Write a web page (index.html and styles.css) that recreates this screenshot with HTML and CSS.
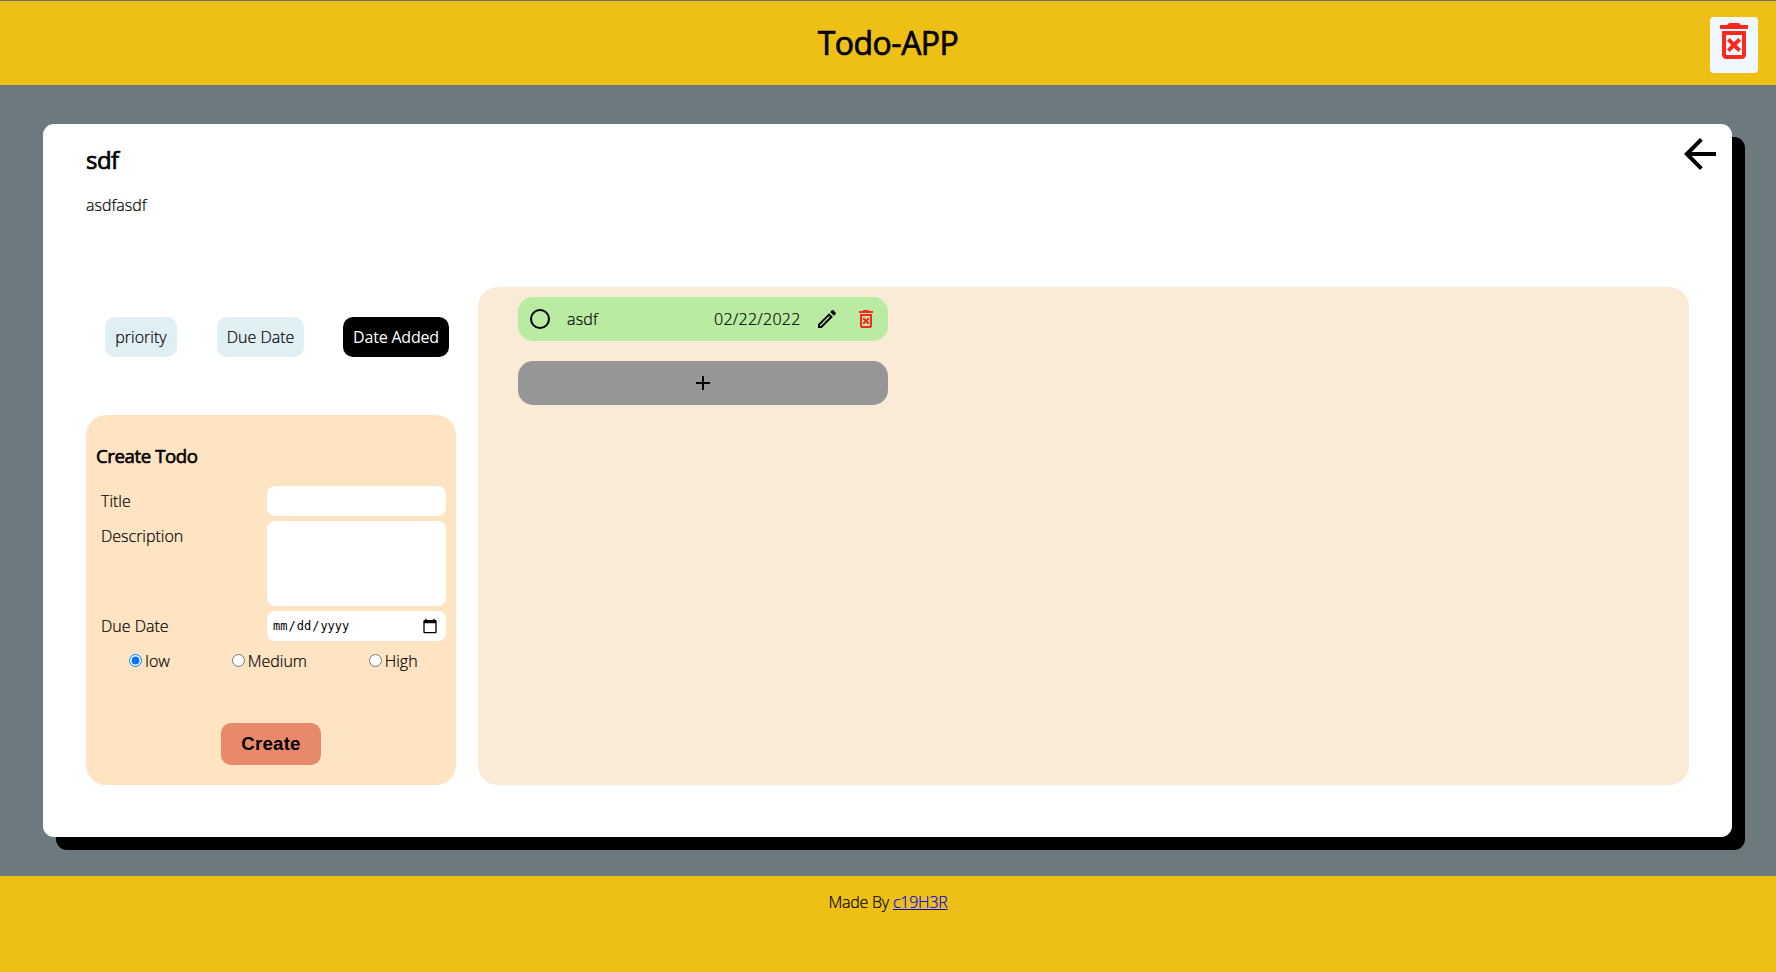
FILE: index.html
```html
<!DOCTYPE html>
<html lang="en">
<head>
<meta charset="utf-8">
<title>Todo-APP</title>
<link rel="stylesheet" href="styles.css">
</head>
<body>
<svg class="defs" width="0" height="0">
  <symbol id="trash" viewBox="0 0 24 24"><path d="M14.120 10.470L12 12.590l-2.130-2.120-1.410 1.410L10.590 14l-2.120 2.120 1.410 1.410L12 15.410l2.120 2.120 1.410-1.410L13.410 14l2.120-2.120zM15.500 4l-1-1h-5l-1 1H5v2h14V4zM6 19c0 1.100.9 2 2 2h8c1.100 0 2-.9 2-2V7H6v12zM8 9h8v10H8V9z"/></symbol>
</svg>
<header class="header">
  <h1 class="brand">Todo-APP</h1>
  <button class="clear" aria-label="Delete all"><svg class="clear-icon" viewBox="0 0 24 24"><use href="#trash"/></svg></button>
</header>
<main class="main">
  <section class="card">
    <div class="card-head">
      <div>
        <h2 class="title">sdf</h2>
        <p class="desc">asdfasdf</p>
      </div>
      <svg class="back" viewBox="0 0 24 24"><path d="M20 11H7.830l5.590-5.590L12 4l-8 8 8 8 1.410-1.410L7.830 13H20v-2z"/></svg>
    </div>
    <div class="content">
      <aside class="side">
        <nav class="sort">
          <button class="sort-btn priority">priority</button>
          <button class="sort-btn due">Due Date</button>
          <button class="sort-btn added">Date Added</button>
        </nav>
        <form class="form">
          <h3 class="form-title">Create Todo</h3>
          <div class="row"><label class="label" for="t">Title</label><input class="field" id="t" type="text"></div>
          <div class="row"><label class="label" for="d">Description</label><textarea class="field area" id="d"></textarea></div>
          <div class="row"><label class="label" for="u">Due Date</label><input class="field date" id="u" type="date"></div>
          <div class="radios">
            <label class="radio"><input type="radio" name="p" checked><span>low</span></label>
            <label class="radio"><input type="radio" name="p"><span>Medium</span></label>
            <label class="radio"><input type="radio" name="p"><span>High</span></label>
          </div>
          <button class="create" type="button">Create</button>
        </form>
      </aside>
      <div class="list">
        <div class="todo">
          <svg class="circle" viewBox="0 0 24 24"><path d="M12 2a10 10 0 1 0 0 20 10 10 0 0 0 0-20zm0 18a8 8 0 1 1 0-16 8 8 0 0 1 0 16z"/></svg>
          <span class="todo-name">asdf</span>
          <span class="todo-date">02/22/2022</span>
          <svg class="pencil" viewBox="0 0 24 24"><path d="M14.060 9.020l.92.92L5.920 19H5v-.92l9.060-9.060M17.660 3c-.25 0-.51.1-.7.290l-1.830 1.830 3.750 3.750 1.830-1.830c.39-.39.39-1.020 0-1.410l-2.340-2.340c-.2-.2-.45-.29-.71-.29zm-3.600 3.190L3 17.250V21h3.750L17.810 9.940l-3.750-3.750z"/></svg>
          <svg class="remove" viewBox="0 0 24 24"><use href="#trash"/></svg>
        </div>
        <div class="add"><svg class="plus" viewBox="0 0 24 24"><path d="M19 13h-6v6h-2v-6H5v-2h6V5h2v6h6v2z"/></svg></div>
      </div>
    </div>
  </section>
</main>
<footer class="footer"><span>Made By <a href="#">c19H3R</a></span></footer>
</body>
</html>
```
FILE: styles.css
```css
* { box-sizing: border-box; }
body {
  margin: 0;
  height: 972px;
  display: flex;
  flex-direction: column;
  overflow: hidden;
  background: #6c797e;
  color: #000;
  font: 300 16px/20px "Open Sans", "Noto Sans", sans-serif;
  -webkit-text-stroke: 0.2px;
}
h1, h2, h3, p { margin: 0; }
.defs { position: absolute; }
.header {
  height: 85px;
  flex: none;
  display: grid;
  grid-template-columns: 1fr auto 1fr;
  align-items: center;
  border-top: 1px solid #6c6c60;
  background: #eec016;
}
.brand {
  grid-column: 2;
  font-size: 32px;
  line-height: 40px;
  font-weight: 500;
  letter-spacing: -0.5px;
  -webkit-text-stroke: 0.7px;
}
.clear {
  justify-self: end;
  display: flex;
  align-items: flex-start;
  width: 48px;
  height: 56px;
  margin: 4px 18px 1px 0;
  padding: 0;
  border: 0;
  border-radius: 4px;
  background: #f0f8ff;
}
.clear-icon { display: block; width: 48px; height: 48px; fill: #ff2820; }
.main { height: 791px; flex: none; padding: 39px 44px 0 43px; }
.card {
  height: 713px;
  border-radius: 11px;
  background: #fff;
  box-shadow: 13px 13px 0 #000;
  padding: 0 43px;
}
.card-head { height: 163px; display: flex; justify-content: space-between; }
.title { margin-top: 21px; font-size: 24px; line-height: 30px; font-weight: 500; letter-spacing: -0.5px; -webkit-text-stroke: 0.7px; }
.desc { margin-top: 20px; }
.back { width: 48px; height: 48px; margin: 6px -35px 0 0; }
.content { display: flex; gap: 22px; height: 498px; }
.side { width: 370px; flex: none; padding-top: 30px; }
.sort { display: flex; padding-left: 19px; height: 98px; align-items: flex-start; }
.sort-btn {
  height: 40px;
  padding: 0;
  border: 0;
  border-radius: 10px;
  background: #e0eff4;
  font: inherit;
  white-space: nowrap;
}
.priority { width: 72px; margin-right: 40px; }
.due { width: 87px; margin-right: 39px; }
.added { width: 106px; background: #000; color: #fff; font-weight: 400; letter-spacing: -0.2px; -webkit-text-stroke: 0; }
.form {
  height: 370px;
  padding: 30px 10px 0;
  border-radius: 20px;
  background: #ffe4c4;
  display: flex;
  flex-direction: column;
}
.form-title { font-size: 18.7px; line-height: 22px; font-weight: 500; letter-spacing: -0.45px; margin-bottom: 19px; -webkit-text-stroke: 0.6px; }
.row { display: flex; justify-content: space-between; margin-bottom: 5px; padding-left: 5px; }
.label { padding-top: 5px; }
.field {
  width: 179px;
  height: 30px;
  margin: 0;
  padding: 5px;
  border: 0;
  border-radius: 8px;
  background: #fff;
  resize: none;
}
.area { height: 85px; }
.date { font: 12px "DejaVu Sans Mono", monospace; -webkit-text-stroke: 0; }
.date::-webkit-calendar-picker-indicator { width: 16px; height: 16px; padding: 0; margin-right: 3px; background-size: 16px 16px; }
.radios { display: flex; justify-content: space-around; margin-top: 5px; }
.radio { display: flex; align-items: flex-start; }
.radio input { margin: 3px 3px 0 5px; width: 13px; height: 13px; }
.create {
  width: 100px;
  height: 42px;
  margin: 52px auto 0;
  padding: 0 0 1px;
  border: 0;
  border-radius: 10px;
  background: #e9896c;
  font: bold 18.7px "Liberation Sans", sans-serif;
  letter-spacing: 0.2px;
  -webkit-text-stroke: 0;
}
.list { flex: 1; padding: 10px 40px; border-radius: 20px; background: #faebd7; }
.todo, .add {
  width: 370px;
  height: 44px;
  border-radius: 15px;
  display: flex;
  align-items: center;
}
.todo { background: #b9eca2; padding-left: 10px; }
.add { margin-top: 20px; background: #969696; justify-content: center; }
.circle, .pencil, .remove, .plus { width: 24px; height: 24px; flex: none; }
.todo-name { margin-left: 15px; width: 147px; letter-spacing: 0.15px; }
.todo-date { width: 87px; white-space: nowrap; letter-spacing: 0.27px; }
.pencil { margin-left: 14px; }
.remove { margin-left: 15px; fill: #ff2820; }
.footer {
  height: 96px;
  flex: none;
  padding-top: 16px;
  text-align: center;
  letter-spacing: -0.22px;
  background: #eec016;
}
.footer a { color: #00e; }
```
